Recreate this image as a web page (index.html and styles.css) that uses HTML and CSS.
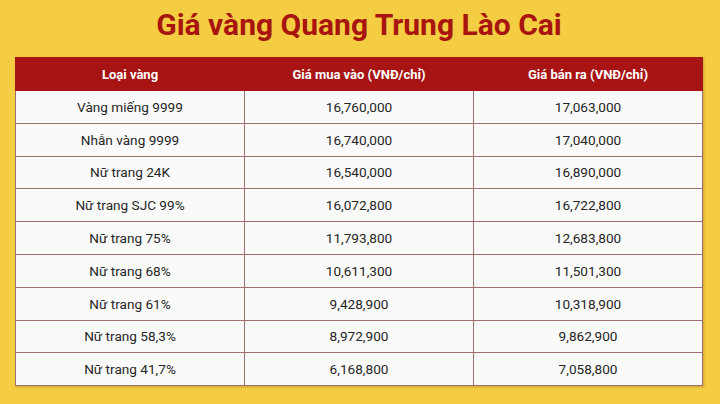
FILE: index.html
```html
<!DOCTYPE html>
<html lang="vi">
<head>
<meta charset="utf-8">
<link rel="stylesheet" href="styles.css">
</head>
<body>
<div class="page">
  <h1 class="title">Giá vàng Quang Trung Lào Cai</h1>
  <table class="prices">
    <thead>
      <tr><th>Loại vàng</th><th>Giá mua vào (VNĐ/chỉ)</th><th>Giá bán ra (VNĐ/chỉ)</th></tr>
    </thead>
    <tbody>
      <tr><td>Vàng miếng 9999</td><td>16,760,000</td><td>17,063,000</td></tr>
      <tr><td>Nhẫn vàng 9999</td><td>16,740,000</td><td>17,040,000</td></tr>
      <tr><td>Nữ trang 24K</td><td>16,540,000</td><td>16,890,000</td></tr>
      <tr><td>Nữ trang SJC 99%</td><td>16,072,800</td><td>16,722,800</td></tr>
      <tr><td>Nữ trang 75%</td><td>11,793,800</td><td>12,683,800</td></tr>
      <tr><td>Nữ trang 68%</td><td>10,611,300</td><td>11,501,300</td></tr>
      <tr><td>Nữ trang 61%</td><td>9,428,900</td><td>10,318,900</td></tr>
      <tr><td>Nữ trang 58,3%</td><td>8,972,900</td><td>9,862,900</td></tr>
      <tr><td>Nữ trang 41,7%</td><td>6,168,800</td><td>7,058,800</td></tr>
    </tbody>
  </table>
</div>
</body>
</html>
```
FILE: styles.css
```css
html, body {
  margin: 0;
  padding: 0;
  background: #f4cd42;
}
.page {
  width: 720px;
  height: 404px;
  box-sizing: border-box;
  padding: 6px 17px 0 15px;
  font-family: Roboto, "Liberation Sans", sans-serif;
}
.title {
  margin: 0;
  height: 51px;
  line-height: 38px;
  text-align: center;
  font-size: 30px;
  font-weight: 700;
  color: #a8150f;
}
.prices {
  width: 688px;
  border-collapse: collapse;
  table-layout: fixed;
  background: #fbfafa;
  box-shadow: 1px 1px 2px rgba(120, 80, 20, 0.35);
}
.prices th {
  background: #a81313;
  color: #fff;
  font-size: 13px;
  font-weight: 700;
  height: 32px;
  padding: 0;
  border: 1px solid #a81313;
}
.prices td {
  height: 31.8px;
  padding: 0;
  text-align: center;
  font-size: 13.6px;
  color: #262626;
  border: 1px solid #a07070;
}
```
